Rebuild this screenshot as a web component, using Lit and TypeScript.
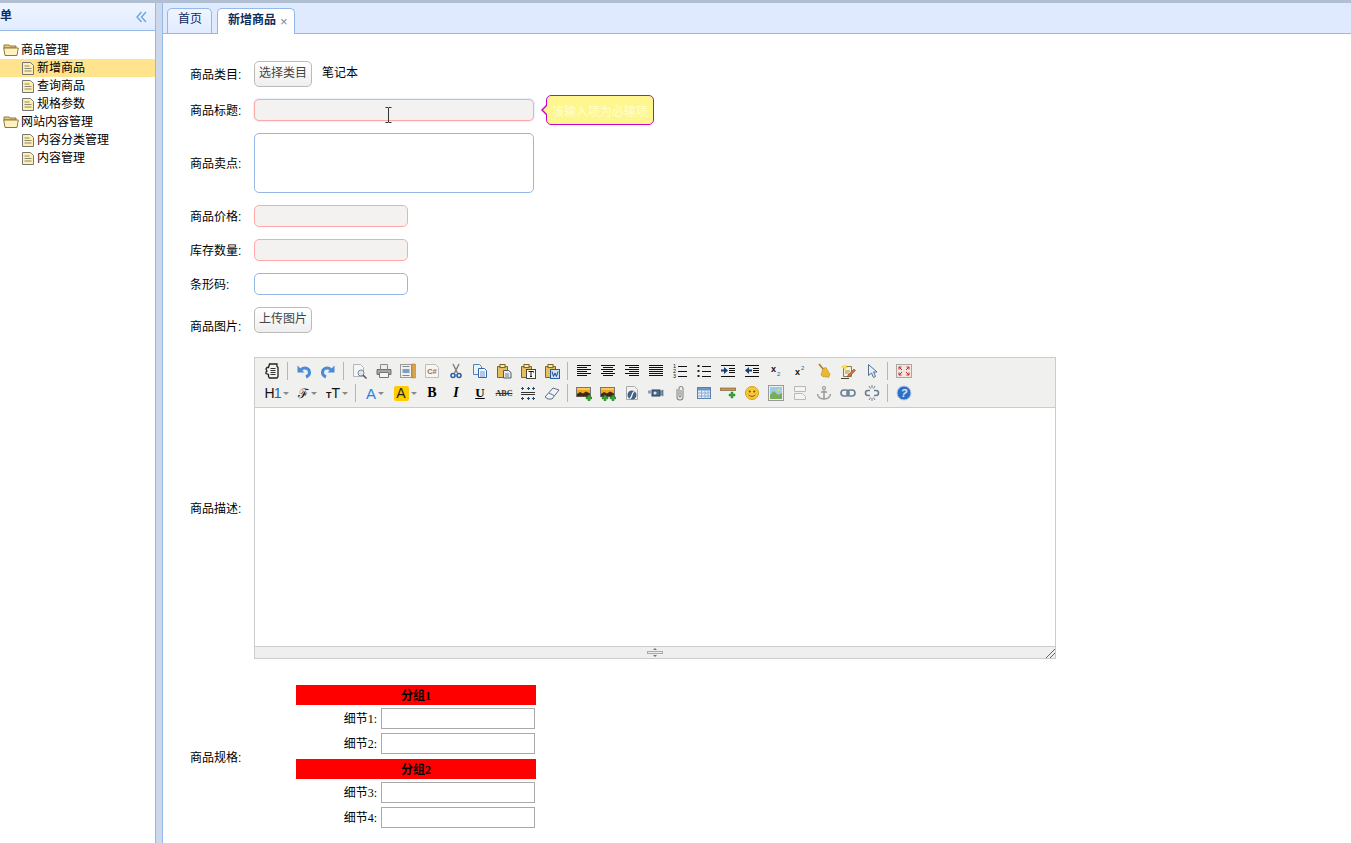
import { LitElement, html, css, svg } from 'lit';
import { customElement } from 'lit/decorators.js';

const lines = (rows: number[][]) =>
  rows.map(([x, y, w]) => svg`<rect x=${x} y=${y} width=${w} height="1" fill="#111"/>`);

const plus = (x: number, y: number) => svg`
  <path d="M${x + 2} ${y}h2v2h2v2h-2v2h-2v-2h-2v-2h2z" fill="#2fa82f" stroke="#1d7a1d" stroke-width=".4"/>`;

const clip = svg`
  <path d="M1.500 3.500h10v11h-10z" fill="#e5bf5e" stroke="#7d6420"/>
  <rect x="4" y="1.500" width="5" height="3" fill="#f5e8b8" stroke="#7d6420"/>`;

const sunset = svg`
  <rect x=".5" y="2.500" width="14" height="9" fill="#f3a521" stroke="#777"/>
  <rect x="1" y="3" width="13" height="2" fill="#f7c95a"/>
  <path d="M1 11.500V9l3-2 3 1.500 3-2 4 2v3z" fill="#3f2a18"/>`;

const ICONS: Record<string, unknown> = {
  source: svg`
    <path d="M5.500 1h7.500v2.500l1 1v9l-1 1.500H5.500l-1-1.500v-2l-2.500-1V9l1-1-1-2 1-1.500h1.500z" fill="#f4f4ea" stroke="#222" stroke-width="1.300"/>
    <path d="M6.500 5.500h5M6.500 7.500h5M6.500 9.500h5M6.500 11.500h5" stroke="#333"/>`,
  undo: svg`
    <path d="M5 6.500c4-3 8.500-1 8.500 3 0 2-1 3.500-3.500 4.500" fill="none" stroke="#4a8bd6" stroke-width="3"/>
    <path d="M1.500 2.500v7h7z" fill="#4a8bd6"/>`,
  redo: svg`
    <path d="M11 6.500c-4-3-8.500-1-8.500 3 0 2 1 3.500 3.500 4.500" fill="none" stroke="#4a8bd6" stroke-width="3"/>
    <path d="M14.500 2.500v7h-7z" fill="#4a8bd6"/>`,
  preview: svg`
    <path d="M1.500 1.500h7l3 3v9h-10z" fill="#f6f6f6" stroke="#b5b5b5"/>
    <circle cx="9" cy="10" r="3" fill="#dbe7f2" stroke="#7b8a99"/>
    <path d="M11 12l3.500 3.500" stroke="#555" stroke-width="1.500"/>`,
  print: svg`
    <path d="M4.500 1.500h7v5h-7z" fill="#eee" stroke="#8b8b8b"/>
    <path d="M1 6.500h14v5H1z" fill="#a5a5a5" stroke="#707070"/>
    <path d="M3.500 9.500h9v5h-9z" fill="#f4f4f4" stroke="#777"/>`,
  template: svg`
    <rect x=".5" y="1.500" width="11" height="13" fill="#f0f0f0" stroke="#444" stroke-dasharray="1 1"/>
    <rect x="2.500" y="6" width="7" height="4" fill="#7d9fc1"/>
    <path d="M2.500 3.500h7M2.500 12.500h7" stroke="#888"/>
    <rect x="12" y="1" width="3.500" height="14" fill="#d9a54a" stroke="#a87a24" stroke-width=".5"/>`,
  code: svg`
    <path d="M1.500 1.500h10l3 3v10h-13z" fill="#f7f5ee" stroke="#bdbdbd"/>
    <text x="8" y="11" font-family="Liberation Sans" font-size="7.500" font-weight="700" fill="#9a6a58" text-anchor="middle">C#</text>`,
  cut: svg`
    <path d="M5 1l4.500 9M11 1L6.500 10" stroke="#777" stroke-width="1.300"/>
    <circle cx="5" cy="12.500" r="2" fill="none" stroke="#2f5fa8" stroke-width="1.600"/>
    <circle cx="11" cy="12.500" r="2" fill="none" stroke="#2f5fa8" stroke-width="1.600"/>`,
  copy: svg`
    <path d="M1.500 1.500h6l2 2v8h-8z" fill="#eaf2fb" stroke="#4f80bd"/>
    <path d="M6.500 5.500h6l2 2v7h-8z" fill="#f6faff" stroke="#2f66ad"/>
    <path d="M8 9h5M8 11h5M8 13h5" stroke="#6b96c9"/>`,
  paste: svg`${clip}
    <path d="M7.500 7.500h5l2.500 2v5.500H7.500z" fill="#e8eef6" stroke="#556"/>
    <path d="M9 11h4M9 13h4" stroke="#778"/>`,
  pastetext: svg`${clip}
    <rect x="6.500" y="6.500" width="9" height="9" fill="#fbfbf3" stroke="#444"/>
    <path d="M8.500 8.500h5v1M11 8.500v5M10 13.500h2" stroke="#111" fill="none"/>`,
  pasteword: svg`${clip}
    <rect x="6.500" y="6.500" width="9" height="9" fill="#cfe0f5" stroke="#2a5ba5"/>
    <path d="M8 8.500l1.500 5 1.500-3.500 1.500 3.500 1.500-5" stroke="#1c4c9c" fill="none"/>`,
  left: svg`${lines([[1, 2, 14], [1, 4, 10], [1, 6, 14], [1, 8, 10], [1, 10, 14], [1, 12, 10]])}`,
  center: svg`${lines([[1, 2, 14], [3, 4, 10], [1, 6, 14], [3, 8, 10], [1, 10, 14], [3, 12, 10]])}`,
  right: svg`${lines([[1, 2, 14], [5, 4, 10], [1, 6, 14], [5, 8, 10], [1, 10, 14], [5, 12, 10]])}`,
  justify: svg`${lines([[1, 2, 14], [1, 4, 14], [1, 6, 14], [1, 8, 14], [1, 10, 14], [1, 12, 14]])}`,
  ol: svg`${lines([[6, 3, 9], [6, 8, 9], [6, 13, 9]])}
    <text font-family="Liberation Sans" font-size="5.500" fill="#111"><tspan x="1" y="5">1</tspan><tspan x="1" y="10">2</tspan><tspan x="1" y="15">3</tspan></text>`,
  ul: svg`${lines([[6, 3, 9], [6, 8, 9], [6, 13, 9]])}
    <path d="M1.500 2h2v2h-2zM1.500 7h2v2h-2zM1.500 12h2v2h-2z" fill="#222"/>`,
  indent: svg`${lines([[1, 2, 14], [9, 5, 6], [9, 7, 6], [9, 9, 6], [1, 13, 14]])}
    <path d="M1 6.500h3V4l4 3.500-4 3.500V8.500H1z" fill="#173d7a"/>`,
  outdent: svg`${lines([[1, 2, 14], [9, 5, 6], [9, 7, 6], [9, 9, 6], [1, 13, 14]])}
    <path d="M8 6.500H5V4L1 7.500 5 11V8.500h3z" fill="#173d7a"/>`,
  sub: svg`
    <text x="3" y="9" font-family="Liberation Sans" font-size="9" font-weight="700" fill="#111">x</text>
    <text x="9" y="13" font-family="Liberation Sans" font-size="6" fill="#2a5ba5">2</text>`,
  sup: svg`
    <text x="3" y="12" font-family="Liberation Sans" font-size="9" font-weight="700" fill="#111">x</text>
    <text x="9" y="7" font-family="Liberation Sans" font-size="6" fill="#2a5ba5">2</text>`,
  broom: svg`
    <path d="M3 1l5 6" stroke="#b2762a" stroke-width="1.600"/>
    <path d="M7 5.500l3-1 4 7-1.500 3-2-1-.5 1-2-1.500-.5 1L5 12z" fill="#e9b92e" stroke="#b98a17" stroke-width=".6"/>`,
  format: svg`
    <path d="M3.500 3.500h8v10h-8z" fill="#f8f1d8" stroke="#8b7a4c"/>
    <path d="M1 4l2-2 1.500 1L6 1l.5 2.500L8 4.500 6 5.500 5 7.500 4 5.500z" fill="#ffd83a"/>
    <path d="M5 8h5M5 10h4" stroke="#9b8c5f"/>
    <path d="M8 12l6-6 1.500 1.500-6 6-2 .5z" fill="#d2703c" stroke="#7d3f1d" stroke-width=".5"/>
    <path d="M1 15.500h8" stroke="#444"/>`,
  select: svg`
    <path d="M4.500 1.500v11l3-2.500 2 4.500 2-1-2-4.500h3.500z" fill="#e7eff8" stroke="#4f6f96"/>`,
  fullscreen: svg`
    <rect x=".5" y="1.500" width="15" height="13" fill="#efe6e0" stroke="#a8a8a8"/>
    <path d="M3 4l3 3M3 4h2.500M3 4v2.500M13 4l-3 3M13 4h-2.500M13 4v2.500M3 12l3-3M3 12h2.500M3 12V9.500M13 12l-3-3M13 12h-2.500M13 12V9.500" stroke="#c22" fill="none"/>`,
  image: svg`${sunset}${plus(10, 10)}`,
  images: svg`${sunset}${plus(2, 10)}${plus(10, 10)}`,
  flash: svg`
    <path d="M2.500 1.500h8l3 3v10h-11z" fill="#f2f2f2" stroke="#aaa"/>
    <circle cx="8" cy="10" r="4.500" fill="#44617f"/>
    <path d="M10.500 6.500c-3 0-2 7-5 7" stroke="#fff" stroke-width="1.200" fill="none"/>`,
  video: svg`
    <rect x="4" y="5" width="8" height="6" fill="#4e6d8c" stroke="#2b3f55"/>
    <path d="M12 7l3-2v6l-3-2z" fill="#7f97ae" stroke="#2b3f55" stroke-width=".5"/>
    <rect x="0" y="5.500" width="4" height="3" fill="#8aa0b5"/>
    <circle cx="7" cy="8" r="1.500" fill="#d8e3ee"/>`,
  attach: svg`
    <path d="M5 4v8a3 3 0 0 0 6 0V3.500a2 2 0 0 0-4 0V11a1 1 0 0 0 2 0V5" fill="none" stroke="#888" stroke-width="1.100"/>`,
  table: svg`
    <rect x="1.500" y="2.500" width="13" height="11" fill="#e4edf8" stroke="#5b7faa"/>
    <rect x="2" y="3" width="12" height="2.500" fill="#6d93c4"/>
    <path d="M2 8h12M2 11h12M5.500 5.500v8M9 5.500v8M12 5.500v8" stroke="#8fb0d6"/>`,
  hr: svg`
    <rect x="0" y="3" width="16" height="2.500" fill="#c29a5c" stroke="#5c3a1e" stroke-width=".5"/>
    ${plus(9, 7)}`,
  emoji: svg`
    <circle cx="8" cy="8" r="6.500" fill="#f7c935" stroke="#d69d1c"/>
    <circle cx="5.700" cy="6.500" r="1" fill="#6b4a12"/><circle cx="10.300" cy="6.500" r="1" fill="#6b4a12"/>
    <path d="M4.500 9.500c1.500 2.500 5.500 2.500 7 0" stroke="#8a5a12" fill="none"/>`,
  map: svg`
    <rect x=".5" y=".5" width="15" height="15" fill="#eee" stroke="#9a9a9a"/>
    <rect x="2" y="2" width="12" height="12" fill="#9ccbe4"/>
    <path d="M2 10l4-4 4 4 4-2v6H2z" fill="#78ad56"/>
    <circle cx="10.500" cy="5" r="1.300" fill="#f4d64a"/>`,
  pagebreak: svg`
    <path d="M2.500 1.500h11v5h-11zM2.500 8.500h8l3 3v3h-11z" fill="#f4f4f4" stroke="#b9b9b9"/>`,
  anchor: svg`
    <circle cx="8" cy="3" r="1.500" fill="none" stroke="#9a9a9a" stroke-width="1.200"/>
    <path d="M8 4.500v9.500M5 7h6M1.500 9c.5 3.500 3 5 6.500 5s6-1.500 6.500-5" fill="none" stroke="#9a9a9a" stroke-width="1.500"/>`,
  link: svg`
    <rect x="1" y="5" width="8" height="6" rx="3" fill="none" stroke="#6b7f95" stroke-width="1.600"/>
    <rect x="7" y="5" width="8" height="6" rx="3" fill="none" stroke="#6b7f95" stroke-width="1.600"/>`,
  unlink: svg`
    <path d="M6 6H4a2.500 2.500 0 0 0 0 5h2M10 6h2a2.500 2.500 0 0 1 0 5h-2" transform="translate(0 -.5)" fill="none" stroke="#6b7f95" stroke-width="1.600"/>
    <path d="M5 1l1.500 2.500M11 1L9.500 3.500M8 0v3M5 15l1.500-2.500M11 15l-1.500-2.500M8 13v3" stroke="#6b7f95"/>`,
  help: svg`
    <circle cx="8" cy="8" r="7" fill="#2c6fc7" stroke="#b8cde6"/>
    <text x="8" y="12" font-family="Liberation Sans" font-size="11" font-weight="700" fill="#dfeaf7" text-anchor="middle" font-style="italic">?</text>`,
};

const ROW_ONE = [
  'source', '|', 'undo', 'redo', '|', 'preview', 'print', 'template', 'code', 'cut', 'copy', 'paste',
  'pastetext', 'pasteword', '|', 'left', 'center', 'right', 'justify', 'ol', 'ul', 'indent', 'outdent',
  'sub', 'sup', 'broom', 'format', 'select', '|', 'fullscreen',
];
const ROW_TWO_TAIL = [
  '|', 'image', 'images', 'flash', 'video', 'attach', 'table', 'hr', 'emoji', 'map', 'pagebreak',
  'anchor', 'link', 'unlink', '|', 'help',
];

const TREE = [
  { label: '商品管理', children: ['新增商品', '查询商品', '规格参数'] },
  { label: '网站内容管理', children: ['内容分类管理', '内容管理'] },
];

const SPEC = [
  { group: '分组1', items: ['细节1', '细节2'] },
  { group: '分组2', items: ['细节3', '细节4'] },
];

@customElement('app-root')
export class AppRoot extends LitElement {
  static styles = css`
    :host {
      display: flex;
      flex-direction: column;
      height: 100vh;
      overflow: hidden;
      font: 12px 'Liberation Sans', 'Noto Sans CJK SC', sans-serif;
      color: #000;
      background: #fff;
    }
    .topline { height: 3px; flex: none; background: #b0bfd2; }
    .main { flex: 1; display: flex; min-height: 0; }

    .west { width: 155px; flex: none; border-right: 1px solid #95b8e7; overflow: hidden; }
    .west-head {
      height: 27px;
      display: flex;
      align-items: center;
      justify-content: space-between;
      padding-right: 8px;
      background: linear-gradient(#eff5ff, #e0ecff);
      border-bottom: 1px solid #95b8e7;
    }
    .west-title { margin-left: -12px; padding-bottom: 4px; font-weight: 700; color: #0e2d5f; }
    .tree { padding-top: 10px; }
    .node { height: 18px; display: flex; align-items: center; gap: 2px; padding-left: 3px; color: #000; white-space: nowrap; }
    .node span { line-height: 14px; }
    .node.leaf { padding-left: 21px; gap: 2px; }
    .node.on { background: #ffe48d; }

    .split { width: 6px; flex: none; background: #cdd9ea; }

    .center { flex: 1; min-width: 0; border-left: 1px solid #95b8e7; display: flex; flex-direction: column; }
    .tabs {
      height: 30px;
      flex: none;
      display: flex;
      align-items: flex-end;
      gap: 5px;
      padding-left: 4px;
      background: #dfeaff;
      border-bottom: 1px solid #95b8e7;
    }
    .tab {
      box-sizing: border-box;
      height: 25px;
      width: 45px;
      display: flex;
      align-items: center;
      padding: 0 0 4px 10px;
      border: 1px solid #95b8e7;
      border-bottom: 0;
      border-radius: 5px 5px 0 0;
      background: linear-gradient(#eff5ff, #e0ecff);
      color: #0e2d5f;
      line-height: 14px;
    }
    .tab.on {
      width: 78px;
      height: 26px;
      margin-bottom: -1px;
      background: #fff;
      font-weight: 700;
      gap: 4px;
    }
    .tab-x { font-weight: 400; font-size: 13px; color: #6f88a8; padding-top: 3px; line-height: 1; }

    .form { position: relative; padding: 27px 0 0 27px; }
    .row { display: grid; grid-template-columns: 64px 1fr; align-items: center; margin-bottom: 12px; }
    .label { line-height: 14px; padding-top: 2px; }
    .row.low .label { align-self: end; padding: 0; margin-bottom: -1px; }
    .row.spec-row .label { padding-top: 3px; }
    .row.gap-editor { margin-top: 24px; margin-bottom: 26px; }
    .control { display: flex; align-items: center; gap: 10px; position: relative; }
    .value { line-height: 14px; padding-bottom: 2px; }

    .btn {
      width: 58px;
      height: 26px;
      box-sizing: border-box;
      display: flex;
      align-items: center;
      justify-content: center;
      border: 1px solid #bbb;
      border-radius: 5px;
      background: linear-gradient(#fff, #eee);
      color: #444;
      line-height: 14px;
      padding-bottom: 2px;
    }
    .box {
      box-sizing: border-box;
      height: 22px;
      width: 154px;
      border: 1px solid #95b8e7;
      border-radius: 5px;
      background: #fff;
    }
    .box.wide { width: 280px; }
    .box.tall { height: 60px; }
    .box.invalid { background: #f3f2f0; border-color: #ffa8a8; }
    .box.focus { box-shadow: 0 0 2px rgba(149, 184, 231, 0.7); }

    .tip {
      position: absolute;
      left: 292px;
      top: -4px;
      box-sizing: border-box;
      width: 108px;
      height: 30px;
      display: flex;
      align-items: center;
      justify-content: center;
      border: 1px solid #cc00cc;
      border-radius: 5px;
      background: #fff68f;
      color: #ffffcc;
      white-space: nowrap;
    }
    .tip::before {
      content: '';
      position: absolute;
      left: -6px;
      top: 50%;
      margin-top: -5px;
      border: 5px solid transparent;
      border-left-width: 0;
      border-right: 5px solid #cc00cc;
    }
    .tip::after {
      content: '';
      position: absolute;
      left: -4px;
      top: 50%;
      margin-top: -4px;
      border: 4px solid transparent;
      border-left-width: 0;
      border-right: 4px solid #fff68f;
    }
    .cursor { position: absolute; left: 131px; top: 8px; }

    .editor { box-sizing: border-box; width: 802px; height: 302px; border: 1px solid #ccc; display: flex; flex-direction: column; }
    .toolbar { height: 50px; flex: none; box-sizing: border-box; padding: 2px 0 0 5px; background: #f0f0ee; border-bottom: 1px solid #ccc; }
    .tool-row { display: flex; height: 22px; align-items: center; }
    .cell { width: 24px; height: 22px; display: flex; align-items: center; justify-content: center; flex: none; }
    .sep { width: 8px; height: 22px; flex: none; display: flex; align-items: center; padding-left: 3px; box-sizing: border-box; }
    .sep::after { content: ''; width: 1px; height: 18px; background: #b5b5b5; }
    .drop { height: 22px; flex: none; display: flex; align-items: center; justify-content: center; gap: 2px; color: #111; }
    .drop::after { content: ''; border: 3px solid transparent; border-top: 3px solid #888; border-bottom: 0; }
    .w30 { width: 30px; }
    .w32 { width: 32px; padding-left: 2px; box-sizing: border-box; }
    .h1 { font-size: 14px; letter-spacing: -1px; gap: 3px; }
    .h1 b { font-weight: 400; color: #1467c8; }
    .fam { font: 400 13px 'DejaVu Serif', serif; }
    .size { font-size: 14px; }
    .size small { font-size: 9px; font-weight: 700; }
    .fore { font-size: 15px; color: #2f7fdc; }
    .back { width: 15px; height: 15px; display: flex; align-items: center; justify-content: center; background: #ffcc00; border-radius: 2px; font-size: 14px; color: #222; }
    .serif-b { font: 700 14px 'Liberation Serif', serif; color: #000; }
    .serif-i { font: italic 700 14px 'Liberation Serif', serif; color: #000; }
    .serif-u { font: 700 13px 'Liberation Serif', serif; color: #000; text-decoration: underline; }
    .strike { font: 700 8px 'Liberation Serif', serif; color: #333; text-decoration: line-through; }
    .edit { flex: 1; background: #fff; }
    .status { height: 11px; flex: none; background: #efefef; border-top: 1px solid #ccc; display: flex; position: relative; justify-content: center; align-items: center; }
    .grip { position: absolute; right: 0; bottom: 0; }

    .spec { margin-left: 42px; width: 240px; font: 12px 'Liberation Serif', 'Noto Sans CJK SC', serif; }
    .group { box-sizing: border-box; height: 20px; padding-top: 2px; display: flex; align-items: center; justify-content: center; background: #f00; font-weight: 700; line-height: 14px; }
    .items { display: flex; flex-direction: column; gap: 4px; padding: 3px 1px 5px 0; }
    .items:last-child { padding-bottom: 0; }
    .item { display: flex; justify-content: flex-end; align-items: center; gap: 4px; height: 21px; }
    .item span { line-height: 14px; }
    .item input { box-sizing: border-box; width: 154px; height: 21px; border: 1px solid #a9a9a9; padding: 0; background: #fff; }
  `;

  private renderIcon(name: string) {
    if (name === '|') return html`<span class="sep"></span>`;
    return html`<span class="cell"><svg width="16" height="16" viewBox="0 0 16 16">${ICONS[name]}</svg></span>`;
  }

  private renderTree() {
    return TREE.map(
      (node) => html`
        <div class="node">
          <svg width="16" height="14" viewBox="0 0 16 14">
            <path d="M1 3V2h5l1 1h6v2H1z" fill="#e9cf85" stroke="#8d7a3a"/>
            <path d="M.7 5h14.600l-1.300 7.500H2z" fill="#fff2bf" stroke="#8d7a3a"/>
          </svg>
          <span>${node.label}</span>
        </div>
        ${node.children.map(
          (leaf) => html`
            <div class="node leaf ${leaf === '新增商品' ? 'on' : ''}">
              <svg width="14" height="15" viewBox="0 0 14 15">
                <path d="M1.500 1.500h8l3 3v9h-11z" fill="#ffefb0" stroke="#777"/>
                <path d="M3.500 5h5M3.500 7.500h7M3.500 10h7" stroke="#8a8a70"/>
              </svg>
              <span>${leaf}</span>
            </div>
          `
        )}
      `
    );
  }

  private renderEditor() {
    return html`
      <div class="editor">
        <div class="toolbar">
          <div class="tool-row">${ROW_ONE.map((n) => this.renderIcon(n))}</div>
          <div class="tool-row">
            <span class="drop w32 h1"><span>H<b>1</b></span></span>
            <span class="drop w30 fam">ℱ</span>
            <span class="drop w30 size"><span><small>T</small>T</span></span>
            <span class="sep"></span>
            <span class="drop w30 fore">A</span>
            <span class="drop w30"><span class="back">A</span></span>
            <span class="cell serif-b">B</span>
            <span class="cell serif-i">I</span>
            <span class="cell serif-u">U</span>
            <span class="cell strike">ABC</span>
            <span class="cell">
              <svg width="16" height="16" viewBox="0 0 16 16">
                <path d="M1 7.500h14M1 9.500h14" stroke="#333"/>
                <path d="M1 3.500h3M2.500 2v3M7 3.500h3M8.500 2v3M12 3.500h3M13.500 2v3M1 13.500h3M2.500 12v3M7 13.500h3M8.500 12v3M12 13.500h3M13.500 12v3" stroke="#27497a"/>
              </svg>
            </span>
            <span class="cell">
              <svg width="16" height="16" viewBox="0 0 16 16">
                <path d="M1 12l8-9 6 2-7 9H4z" fill="#f0f3f7" stroke="#5f6f80"/>
                <path d="M5 8l5 2.500" stroke="#5f6f80"/>
              </svg>
            </span>
            ${ROW_TWO_TAIL.map((n) => this.renderIcon(n))}
          </div>
        </div>
        <div class="edit"></div>
        <div class="status">
          <svg width="16" height="9" viewBox="0 0 16 9">
            <path d="M8 0l2 2H6zM8 9l2-2H6z" fill="#777"/>
            <rect x=".5" y="3.500" width="15" height="2" fill="#eee" stroke="#aaa"/>
          </svg>
          <svg class="grip" width="9" height="9" viewBox="0 0 9 9">
            <path d="M0 9l9-9M4 9l5-5" stroke="#666"/>
          </svg>
        </div>
      </div>
    `;
  }

  render() {
    return html`
      <div class="topline"></div>
      <div class="main">
        <aside class="west">
          <div class="west-head">
            <span class="west-title">菜单</span>
            <svg width="11" height="12" viewBox="0 0 11 12">
              <path d="M5.500 1L1 6l4.500 5M10 1L5.500 6l4.500 5" fill="none" stroke="#6fa5dc" stroke-width="1.400"/>
            </svg>
          </div>
          <div class="tree">${this.renderTree()}</div>
        </aside>
        <div class="split"></div>
        <section class="center">
          <div class="tabs">
            <div class="tab">首页</div>
            <div class="tab on">新增商品<span class="tab-x">×</span></div>
          </div>
          <div class="form">
            <div class="row">
              <span class="label">商品类目:</span>
              <div class="control"><div class="btn">选择类目</div><span class="value">笔记本</span></div>
            </div>
            <div class="row">
              <span class="label">商品标题:</span>
              <div class="control">
                <div class="box wide invalid focus"></div>
                <div class="tip">该输入项为必输项</div>
                <svg class="cursor" width="7" height="16" viewBox="0 0 7 16">
                  <path d="M.5 .5h2.500l.5.5.5-.5h2.500M3.500 1v14M.5 15.500h2.500l.5-.5.5.5h2.500" fill="none" stroke="#333"/>
                </svg>
              </div>
            </div>
            <div class="row">
              <span class="label">商品卖点:</span>
              <div class="control"><div class="box wide tall"></div></div>
            </div>
            <div class="row">
              <span class="label">商品价格:</span>
              <div class="control"><div class="box invalid"></div></div>
            </div>
            <div class="row">
              <span class="label">库存数量:</span>
              <div class="control"><div class="box invalid"></div></div>
            </div>
            <div class="row">
              <span class="label">条形码:</span>
              <div class="control"><div class="box"></div></div>
            </div>
            <div class="row low">
              <span class="label">商品图片:</span>
              <div class="control"><div class="btn">上传图片</div></div>
            </div>
            <div class="row gap-editor">
              <span class="label">商品描述:</span>
              <div class="control">${this.renderEditor()}</div>
            </div>
            <div class="row spec-row">
              <span class="label">商品规格:</span>
              <div class="spec">
                ${SPEC.map(
                  (s) => html`
                    <div class="group">${s.group}</div>
                    <div class="items">
                      ${s.items.map((i) => html`<div class="item"><span>${i}:</span><input /></div>`)}
                    </div>
                  `
                )}
              </div>
            </div>
          </div>
        </section>
      </div>
    `;
  }
}
